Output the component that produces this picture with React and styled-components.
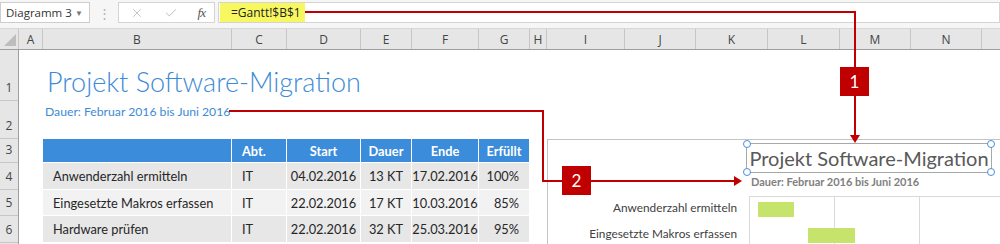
import React from 'react';
import styled, { createGlobalStyle } from 'styled-components';
import { X, Check } from 'lucide-react';

const GlobalStyle = createGlobalStyle`
  html, body {
    margin: 0;
    padding: 0;
    background: #fff;
  }
  body {
    width: 1000px;
    height: 244px;
    overflow: hidden;
    font-family: "Open Sans", "Liberation Sans", sans-serif;
  }
`;

const COLS = [
  ['A', 24], ['B', 189], ['C', 55], ['D', 74], ['E', 51], ['F', 67], ['G', 51],
  ['H', 17], ['I', 78], ['J', 71], ['K', 72], ['L', 72], ['M', 71], ['N', 71], ['', 71],
];

const ROWS = [['1', 51], ['2', 38], ['3', 24], ['4', 27], ['5', 26], ['6', 27], ['', 27]];

const TASKS = [
  { name: 'Anwenderzahl ermitteln', abt: 'IT', start: '04.02.2016', dauer: '13 KT', ende: '17.02.2016', done: '100%', off: 8, len: 36 },
  { name: 'Eingesetzte Makros erfassen', abt: 'IT', start: '22.02.2016', dauer: '17 KT', ende: '10.03.2016', done: '85%', off: 58, len: 47 },
  { name: 'Hardware prüfen', abt: 'IT', start: '22.02.2016', dauer: '32 KT', ende: '25.03.2016', done: '95%', off: 58, len: 88 },
];

// only the first two chart rows are inside the visible window
const CHART_ROWS = TASKS.slice(0, 2);

const Page = styled.div`
  position: relative;
  width: 1000px;
  height: 244px;
  overflow: hidden;
`;

/* formula bar */
const FormulaBar = styled.div`
  display: flex;
  align-items: center;
  height: 28px;
  background: #f6f6f6;
  box-sizing: border-box;
  padding-bottom: 3px;
`;

const NameBox = styled.div`
  width: 90px;
  height: 21px;
  box-sizing: border-box;
  border: 1px solid #cdcdcd;
  background: #fff;
  display: flex;
  align-items: center;
  justify-content: space-between;
  padding: 0 6px 0 5px;
  font-size: 11.5px;
  color: #333;
  white-space: nowrap;
`;

const Caret = styled.span`
  font-size: 8px;
  color: #777;
`;

const Grip = styled.div`
  width: 28px;
  text-align: center;
  color: #b4b4b4;
  font-size: 13px;
`;

const FnBox = styled.div`
  width: 97px;
  height: 21px;
  box-sizing: border-box;
  border: 1px solid #d4d4d4;
  background: #fff;
  display: flex;
  align-items: center;
  justify-content: space-between;
  padding: 0 9px 0 11px;
  color: #b8b8b8;
`;

const Fx = styled.span`
  font-family: "Liberation Serif", serif;
  font-style: italic;
  font-size: 13px;
  color: #555;
  letter-spacing: -1px;
`;

const FormulaField = styled.div`
  flex: 1;
  height: 21px;
  margin-left: 3px;
  box-sizing: border-box;
  border: 1px solid #d4d4d4;
  background: #fff;
  display: flex;
  padding-left: 1px;
`;

const Highlight = styled.span`
  width: 85px;
  box-sizing: border-box;
  background: #f7f760;
  padding-left: 11px;
  display: flex;
  align-items: center;
  font-size: 12px;
  color: #222;
  white-space: nowrap;
`;

/* column header */
const ColHeader = styled.div`
  display: flex;
  height: 22px;
  box-sizing: border-box;
  background: #e6e6e6;
  border-top: 1px solid #d8d8d8;
  border-bottom: 1px solid #9e9e9e;
  overflow: hidden;
`;

const Corner = styled.div`
  position: relative;
  width: 19px;
  flex-shrink: 0;
  box-sizing: border-box;
  border-right: 1px solid #c6c6c6;
  &::after {
    content: '';
    position: absolute;
    right: 2px;
    bottom: 3px;
    border-left: 12px solid transparent;
    border-bottom: 12px solid #bdbdbd;
  }
`;

const ColHead = styled.div`
  width: ${({ w }) => w}px;
  flex-shrink: 0;
  box-sizing: border-box;
  border-right: 1px solid #c6c6c6;
  display: flex;
  align-items: center;
  justify-content: center;
  font-size: 12px;
  color: #444;
`;

/* sheet body */
const Body = styled.div`
  display: flex;
`;

const RowHeads = styled.div`
  width: 19px;
  flex-shrink: 0;
  background: #e6e6e6;
  box-sizing: border-box;
  border-right: 1px solid #9e9e9e;
`;

const RowHead = styled.div`
  height: ${({ h }) => h}px;
  box-sizing: border-box;
  border-bottom: 1px solid #c6c6c6;
  display: flex;
  align-items: flex-end;
  justify-content: center;
  padding-bottom: 4px;
  font-size: 12px;
  color: #444;
`;

const Cells = styled.div`
  flex: 1;
  display: flex;
  flex-direction: column;
  padding-left: 24px;
`;

const TitleRow = styled.div`
  height: 51px;
  display: flex;
  align-items: flex-end;
  padding: 0 0 6px 4px;
  box-sizing: border-box;
`;

const SheetTitle = styled.h1`
  margin: 0;
  font-family: Lato, "Open Sans", sans-serif;
  font-weight: 300;
  font-size: 27px;
  line-height: 27px;
  color: #3d8bd6;
  white-space: nowrap;
`;

const SubRow = styled.div`
  height: 38px;
  padding: 3px 0 0 2px;
  box-sizing: border-box;
  font-family: Lato, "Open Sans", sans-serif;
  font-size: 12.2px;
  line-height: 16px;
  color: #3d8bd6;
`;

const Table = styled.div`
  display: grid;
  grid-template-columns: 189px 55px 74px 51px 67px 51px;
  grid-template-rows: 24px 27px 26px 27px;
  width: 487px;
  font-family: Lato, "Open Sans", sans-serif;
  font-size: 12.8px;
`;

const Cell = styled.div`
  box-sizing: border-box;
  border-right: 1px solid #fff;
  border-bottom: 1px solid #fff;
  display: flex;
  align-items: center;
  justify-content: ${({ align }) => (align === 'right' ? 'flex-end' : align === 'left' ? 'flex-start' : 'center')};
  padding: ${({ align }) => (align === 'right' ? '0 10px 0 0' : align === 'left' ? '0 0 0 10px' : '0')};
  background: ${({ head, odd }) => (head ? '#3b8cda' : odd ? '#f2f2f2' : '#e7e7e7')};
  color: ${({ head }) => (head ? '#fff' : '#262626')};
  font-weight: ${({ head }) => (head ? 700 : 400)};
  white-space: nowrap;
`;

/* chart object */
const Chart = styled.div`
  position: absolute;
  left: 547px;
  top: 139px;
  width: 470px;
  height: 120px;
  box-sizing: border-box;
  border: 1px solid #c4c4c4;
  background: #fff;
  display: flex;
  flex-direction: column;
  z-index: 1;
`;

const ChartTitleBox = styled.div`
  position: relative;
  margin: 3px 0 0 198px;
  width: 246px;
  height: 30px;
  box-sizing: border-box;
  border: 1px solid #a8a8a8;
  display: flex;
  align-items: center;
  justify-content: center;
  font-family: Lato, "Open Sans", sans-serif;
  font-size: 20px;
  color: #595959;
  white-space: nowrap;
`;

const Handle = styled.span`
  position: absolute;
  width: 6px;
  height: 6px;
  border-radius: 50%;
  border: 1px solid #4a90d9;
  background: #fff;
  ${({ top }) => (top ? 'top: -4px;' : 'bottom: -4px;')}
  ${({ left }) => (left ? 'left: -4px;' : 'right: -4px;')}
`;

const ChartSub = styled.div`
  margin: 3px 0 0 203px;
  font-family: Lato, "Open Sans", sans-serif;
  font-weight: 700;
  font-size: 11px;
  line-height: 12px;
  color: #808080;
  white-space: nowrap;
`;

const PlotRow = styled.div`
  display: flex;
  margin-top: 8px;
  flex: 1;
`;

const Labels = styled.div`
  width: 201px;
  box-sizing: border-box;
  padding-right: 12px;
  margin-top: -1px;
  font-family: Lato, "Open Sans", sans-serif;
  font-size: 11.8px;
  color: #404040;
  text-align: right;
`;

const Label = styled.div`
  height: 26px;
  line-height: 26px;
  white-space: nowrap;
`;

const Plot = styled.div`
  position: relative;
  flex: 1;
  display: flex;
  border-top: 1px solid #d9d9d9;
  border-left: 1px solid #d9d9d9;
`;

const GridCol = styled.div`
  width: 85px;
  flex-shrink: 0;
  box-sizing: border-box;
  border-right: 1px solid #d9d9d9;
`;

const Bar = styled.div`
  position: absolute;
  height: 15px;
  background: #c6e36c;
`;

/* annotations */
const Overlay = styled.svg`
  position: absolute;
  left: 0;
  top: 0;
  z-index: 2;
  pointer-events: none;
`;

const Marker = styled.div`
  position: absolute;
  left: ${({ x }) => x}px;
  top: ${({ y }) => y}px;
  width: 29px;
  height: 29px;
  background: #c00000;
  color: #fff;
  display: flex;
  align-items: center;
  justify-content: center;
  font-family: Lato, "Open Sans", sans-serif;
  font-size: 17px;
  z-index: 3;
`;

const App = () => {
  return (
    <Page>
      <GlobalStyle />
      <FormulaBar>
        <NameBox>
          Diagramm 3<Caret>▼</Caret>
        </NameBox>
        <Grip>⋮</Grip>
        <FnBox>
          <X size={14} strokeWidth={1.4} />
          <Check size={14} strokeWidth={1.6} />
          <Fx>fx</Fx>
        </FnBox>
        <FormulaField>
          <Highlight>=Gantt!$B$1</Highlight>
        </FormulaField>
      </FormulaBar>

      <ColHeader>
        <Corner />
        {COLS.map(([l, w], i) => (
          <ColHead key={i} w={w}>{l}</ColHead>
        ))}
      </ColHeader>

      <Body>
        <RowHeads>
          {ROWS.map(([l, h], i) => (
            <RowHead key={i} h={h}>{l}</RowHead>
          ))}
        </RowHeads>
        <Cells>
          <TitleRow>
            <SheetTitle>Projekt Software-Migration</SheetTitle>
          </TitleRow>
          <SubRow>Dauer: Februar 2016 bis Juni 2016</SubRow>
          <Table>
            <Cell head />
            <Cell head align="left">Abt.</Cell>
            <Cell head>Start</Cell>
            <Cell head>Dauer</Cell>
            <Cell head>Ende</Cell>
            <Cell head>Erfüllt</Cell>
            {TASKS.map((t, i) => (
              <React.Fragment key={t.name}>
                <Cell odd={i % 2 === 1} align="left">{t.name}</Cell>
                <Cell odd={i % 2 === 1} align="left">{t.abt}</Cell>
                <Cell odd={i % 2 === 1}>{t.start}</Cell>
                <Cell odd={i % 2 === 1}>{t.dauer}</Cell>
                <Cell odd={i % 2 === 1}>{t.ende}</Cell>
                <Cell odd={i % 2 === 1} align="right">{t.done}</Cell>
              </React.Fragment>
            ))}
          </Table>
        </Cells>
      </Body>

      <Chart>
        <ChartTitleBox>
          Projekt Software-Migration
          <Handle top left />
          <Handle top />
          <Handle left />
          <Handle />
        </ChartTitleBox>
        <ChartSub>Dauer: Februar 2016 bis Juni 2016</ChartSub>
        <PlotRow>
          <Labels>
            {CHART_ROWS.map((t) => (
              <Label key={t.name}>{t.name}</Label>
            ))}
          </Labels>
          <Plot>
            <GridCol />
            <GridCol />
            <GridCol />
            {CHART_ROWS.map((t, i) => (
              <Bar key={t.name} style={{ left: t.off, width: t.len, top: 5 + i * 26 }} />
            ))}
          </Plot>
        </PlotRow>
      </Chart>

      <Overlay width="1000" height="244" viewBox="0 0 1000 244">
        <g stroke="#c00000" strokeWidth="2" fill="none">
          <polyline points="305,12 855,12 855,68" />
          <line x1="855" y1="95" x2="855" y2="136" />
          <polyline points="229,111 543,111 543,181 563,181" />
          <line x1="589" y1="181" x2="735" y2="181" />
        </g>
        <polygon points="850,135 860,135 855,143" fill="#c00000" />
        <polygon points="734,176 734,186 742,181" fill="#c00000" />
      </Overlay>
      <Marker x={840} y={67}>1</Marker>
      <Marker x={562} y={166}>2</Marker>
    </Page>
  );
};

export default App;
